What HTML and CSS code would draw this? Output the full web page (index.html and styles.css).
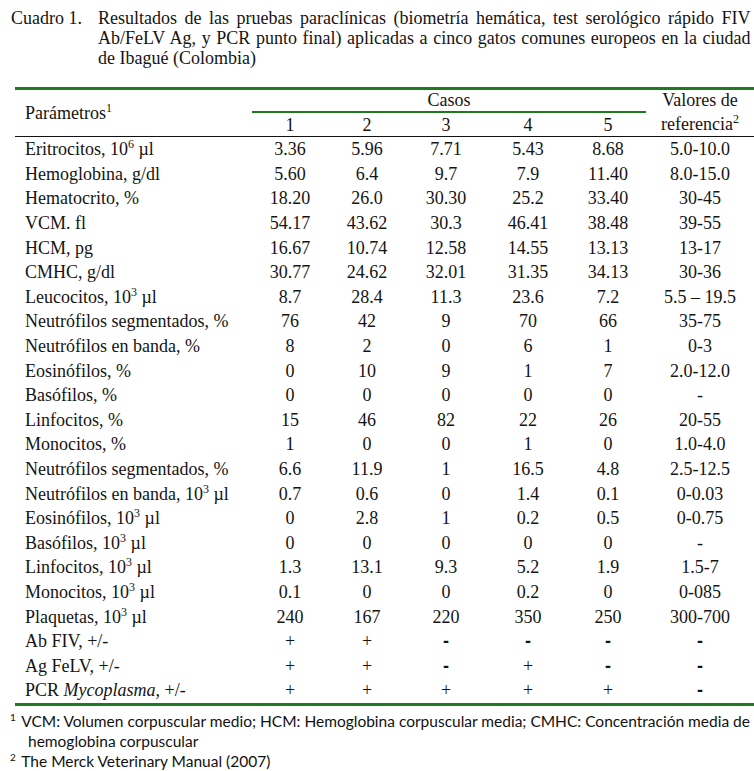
FILE: index.html
```html
<!DOCTYPE html>
<html lang="es">
<head>
<meta charset="utf-8">
<title>Cuadro 1</title>
<link rel="stylesheet" href="styles.css">
</head>
<body>
<div class="page">
  <div class="caption">
    <div class="caption-label">Cuadro 1.</div>
    <div class="caption-text">
      <span class="cline">Resultados de las pruebas paraclínicas (biometría hemática, test serológico rápido FIV</span>
      <span class="cline">Ab/FeLV Ag, y PCR punto final) aplicadas a cinco gatos comunes europeos en la ciudad</span>
      <span class="cline last">de Ibagué (Colombia)</span>
    </div>
  </div>

  <table class="data">
    <colgroup>
      <col class="c-param"><col class="c1"><col class="c2"><col class="c3"><col class="c4"><col class="c5"><col class="c-ref">
    </colgroup>
    <thead>
      <tr class="h1">
        <th rowspan="2" class="param">Parámetros<sup>1</sup></th>
        <th colspan="5" class="casos">Casos</th>
        <th class="ref">Valores de</th>
      </tr>
      <tr class="h2">
        <th>1</th><th>2</th><th>3</th><th>4</th><th>5</th>
        <th class="ref">referencia<sup>2</sup></th>
      </tr>
    </thead>
    <tbody>
      <tr><td>Eritrocitos, 10<sup>6</sup> µl</td><td>3.36</td><td>5.96</td><td>7.71</td><td>5.43</td><td>8.68</td><td>5.0-10.0</td></tr>
      <tr><td>Hemoglobina, g/dl</td><td>5.60</td><td>6.4</td><td>9.7</td><td>7.9</td><td>11.40</td><td>8.0-15.0</td></tr>
      <tr><td>Hematocrito, %</td><td>18.20</td><td>26.0</td><td>30.30</td><td>25.2</td><td>33.40</td><td>30-45</td></tr>
      <tr><td>VCM. fl</td><td>54.17</td><td>43.62</td><td>30.3</td><td>46.41</td><td>38.48</td><td>39-55</td></tr>
      <tr><td>HCM, pg</td><td>16.67</td><td>10.74</td><td>12.58</td><td>14.55</td><td>13.13</td><td>13-17</td></tr>
      <tr><td>CMHC, g/dl</td><td>30.77</td><td>24.62</td><td>32.01</td><td>31.35</td><td>34.13</td><td>30-36</td></tr>
      <tr><td>Leucocitos, 10<sup>3</sup> µl</td><td>8.7</td><td>28.4</td><td>11.3</td><td>23.6</td><td>7.2</td><td>5.5 – 19.5</td></tr>
      <tr><td>Neutrófilos segmentados, %</td><td>76</td><td>42</td><td>9</td><td>70</td><td>66</td><td>35-75</td></tr>
      <tr><td>Neutrófilos en banda, %</td><td>8</td><td>2</td><td>0</td><td>6</td><td>1</td><td>0-3</td></tr>
      <tr><td>Eosinófilos, %</td><td>0</td><td>10</td><td>9</td><td>1</td><td>7</td><td>2.0-12.0</td></tr>
      <tr><td>Basófilos, %</td><td>0</td><td>0</td><td>0</td><td>0</td><td>0</td><td>-</td></tr>
      <tr><td>Linfocitos, %</td><td>15</td><td>46</td><td>82</td><td>22</td><td>26</td><td>20-55</td></tr>
      <tr><td>Monocitos, %</td><td>1</td><td>0</td><td>0</td><td>1</td><td>0</td><td>1.0-4.0</td></tr>
      <tr><td>Neutrófilos segmentados, %</td><td>6.6</td><td>11.9</td><td>1</td><td>16.5</td><td>4.8</td><td>2.5-12.5</td></tr>
      <tr><td>Neutrófilos en banda, 10<sup>3</sup> µl</td><td>0.7</td><td>0.6</td><td>0</td><td>1.4</td><td>0.1</td><td>0-0.03</td></tr>
      <tr><td>Eosinófilos, 10<sup>3</sup> µl</td><td>0</td><td>2.8</td><td>1</td><td>0.2</td><td>0.5</td><td>0-0.75</td></tr>
      <tr><td>Basófilos, 10<sup>3</sup> µl</td><td>0</td><td>0</td><td>0</td><td>0</td><td>0</td><td>-</td></tr>
      <tr><td>Linfocitos, 10<sup>3</sup> µl</td><td>1.3</td><td>13.1</td><td>9.3</td><td>5.2</td><td>1.9</td><td>1.5-7</td></tr>
      <tr><td>Monocitos, 10<sup>3</sup> µl</td><td>0.1</td><td>0</td><td>0</td><td>0.2</td><td>0</td><td>0-085</td></tr>
      <tr><td>Plaquetas, 10<sup>3</sup> µl</td><td>240</td><td>167</td><td>220</td><td>350</td><td>250</td><td>300-700</td></tr>
      <tr><td>Ab FIV, +/-</td><td>+</td><td>+</td><td class="neg">-</td><td class="neg">-</td><td class="neg">-</td><td class="neg">-</td></tr>
      <tr><td>Ag FeLV, +/-</td><td>+</td><td>+</td><td class="neg">-</td><td>+</td><td class="neg">-</td><td class="neg">-</td></tr>
      <tr><td>PCR <i>Mycoplasma</i>, +/-</td><td>+</td><td>+</td><td>+</td><td>+</td><td>+</td><td class="neg">-</td></tr>
    </tbody>
  </table>

  <div class="notes">
    <p class="note"><sup>1</sup> VCM: Volumen corpuscular medio; HCM: Hemoglobina corpuscular media; CMHC: Concentración media de hemoglobina corpuscular</p>
    <p class="note"><sup>2</sup> The Merck Veterinary Manual (2007)</p>
  </div>
</div>
</body>
</html>
```

FILE: styles.css
```css
html, body {
  margin: 0;
  padding: 0;
  background: #ffffff;
}

body {
  font-family: "Liberation Serif", "Times New Roman", serif;
  color: #141414;
  overflow: hidden;
}

.page {
  padding-top: 8px;
}

/* caption: taller, narrow glyphs as in the scanned original */
.caption {
  display: flex;
  width: 814px;
  height: 60px;
  padding-left: 11.9px;
  font-family: "Liberation Serif", "Times New Roman", serif;
  font-size: 19.5px;
  line-height: 20px;
  transform: scaleX(0.923);
  transform-origin: 0 0;
}

.caption-label {
  flex: none;
  width: 94.3px;
}

.caption-text {
  flex: none;
  width: 707px;
}

.cline {
  display: block;
  white-space: nowrap;
  text-align: justify;
  text-align-last: justify;
}

.cline.last {
  text-align-last: left;
}

.data {
  margin-top: 19px;
  margin-left: 15px;
  width: 739px;
  table-layout: fixed;
  border-collapse: collapse;
  font-family: "Liberation Serif", "Times New Roman", serif;
  font-size: 18px;
  border-top: 3px solid #1f7a1f;
  border-bottom: 3px solid #1f7a1f;
}

.c-param { width: 237px; }
.c1 { width: 76px; }
.c2 { width: 78px; }
.c3 { width: 80px; }
.c4 { width: 84px; }
.c5 { width: 76px; }
.c-ref { width: 108px; }

.data th,
.data td {
  font-family: "Liberation Serif", "Times New Roman", serif;
  font-weight: normal;
  padding: 0;
  line-height: 20px;
}

.data th {
  text-align: center;
}

.data sup {
  font-size: 12px;
  line-height: 0;
  vertical-align: 7px;
}

.h1 th {
  height: 21px;
  vertical-align: top;
}

.h2 {
  border-bottom: 1px solid #111;
}

.h2 th {
  height: 23px;
  vertical-align: middle;
}

.data th.param {
  text-align: left;
  padding-left: 10px;
  vertical-align: middle;
}

.data th.casos {
  border-bottom: 2px solid #1f7a1f;
}

.data td {
  height: 24.6px;
  text-align: center;
  white-space: nowrap;
}

.data td:first-child {
  text-align: left;
  padding-left: 10px;
}

.data td.neg {
  font-family: "Liberation Sans", sans-serif;
  font-weight: bold;
}

.notes {
  margin-top: 5px;
  padding-left: 10px;
  font-family: "Lato", "Open Sans", sans-serif;
  font-size: 15.5px;
  line-height: 20px;
  color: #111;
}

.note {
  margin: 0;
  padding-left: 18px;
  text-indent: -18px;
}

.note sup {
  font-size: 10px;
  line-height: 0;
  vertical-align: 6px;
  margin-right: 2px;
}
```
